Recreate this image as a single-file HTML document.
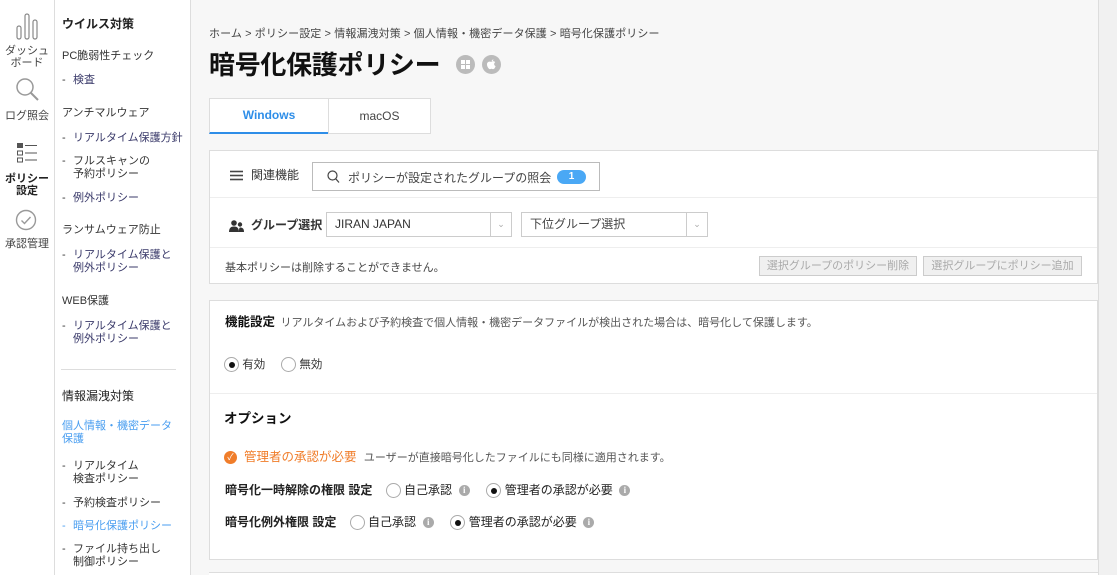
<!DOCTYPE html>
<html><head><meta charset="utf-8"><style>
*{box-sizing:border-box;margin:0;padding:0}
body{width:1117px;height:575px;overflow:hidden;background:#f7f7f7;font-family:"Liberation Sans","Noto Sans CJK JP",sans-serif;color:#333;font-size:11px;position:relative}
.a{position:absolute;white-space:nowrap}
.icol{position:absolute;left:0;top:0;width:55px;height:575px;background:#fff;border-right:1px solid #ddd}
.snav{position:absolute;left:55px;top:0;width:136px;height:575px;background:#fff;border-right:1px solid #ddd}
.ic{position:absolute;left:0;width:54px;text-align:center;font-size:11px;line-height:12px;color:#444}
.n{position:absolute;left:7px;font-size:11px;line-height:13px;color:#333}
.d{position:absolute;left:7px;font-size:11px;line-height:13px;color:#333}
.d span{display:inline-block;width:11px}
.d .t{color:#3a3a6a}
.panel{position:absolute;background:#fff;border:1px solid #ddd}
.btn{position:absolute;border:1px solid #ccc;background:#f0f0f0;color:#aaa;font-size:11px;text-align:center;line-height:18px}
.radio{display:inline-block;width:15px;height:15px;border:1px solid #aaa;border-radius:50%;vertical-align:middle;position:relative;background:#fff}
.radio.on::after{content:"";position:absolute;left:3.5px;top:3.5px;width:6px;height:6px;border-radius:50%;background:#111}
.info{display:inline-block;width:11px;height:11px;border-radius:50%;background:#aaa;color:#fff;font-size:9px;line-height:11px;text-align:center;font-weight:bold;vertical-align:middle;font-family:"Liberation Serif",serif}
.sel{position:absolute;border:1px solid #ccc;background:#fff;height:25px;font-size:12px;line-height:23px;padding-left:8px;color:#333}
.sel .ar{position:absolute;right:0;top:0;width:21px;height:23px;border-left:1px solid #ccc;color:#aaa;text-align:center;font-size:9px}
.row{font-size:12px;color:#222}
</style></head><body>
<div class="icol">
<svg class="a" style="left:16px;top:12px" width="22" height="28" viewBox="0 0 22 28"><g fill="none" stroke="#888" stroke-width="1.2"><rect x="1" y="14" width="4" height="13" rx="2"/><rect x="9" y="2" width="4" height="25" rx="2"/><rect x="17" y="8" width="4" height="19" rx="2"/></g></svg>
<div class="ic" style="top:45px">ダッシュ<br>ボード</div>
<svg class="a" style="left:15px;top:77px" width="26" height="24" viewBox="0 0 26 24"><circle cx="10" cy="10" r="8" fill="none" stroke="#999" stroke-width="1.5"/><line x1="16" y1="16" x2="23" y2="23" stroke="#999" stroke-width="2"/></svg>
<div class="ic" style="top:110px">ログ照会</div>
<svg class="a" style="left:16px;top:142px" width="22" height="22" viewBox="0 0 22 22"><rect x="1" y="1" width="6" height="5" fill="#555"/><rect x="1.5" y="9" width="5" height="4" fill="none" stroke="#555"/><rect x="1.5" y="16" width="5" height="4" fill="none" stroke="#555"/><g stroke="#555"><line x1="9" y1="3.5" x2="21" y2="3.5"/><line x1="9" y1="11" x2="21" y2="11"/><line x1="9" y1="18" x2="21" y2="18"/></g></svg>
<div class="ic" style="top:173px;font-weight:bold;color:#222">ポリシー<br>設定</div>
<svg class="a" style="left:15px;top:209px" width="22" height="22" viewBox="0 0 22 22"><circle cx="11" cy="11" r="9.5" fill="none" stroke="#999" stroke-width="1.4"/><path d="M6.5 11.5l3 3 6-6.5" fill="none" stroke="#999" stroke-width="1.4"/></svg>
<div class="ic" style="top:238px">承認管理</div>
</div>
<div class="snav">
<div class="n" style="top:18px;font-weight:bold;font-size:12px;color:#222">ウイルス対策</div>
<div class="n" style="top:50px">PC脆弱性チェック</div>
<div class="d" style="top:74px"><span>-</span><b class="t" style="font-weight:normal">検査</b></div>
<div class="n" style="top:107px">アンチマルウェア</div>
<div class="d" style="top:132px"><span>-</span><b class="t" style="font-weight:normal">リアルタイム保護方針</b></div>
<div class="d" style="top:155px"><span>-</span>フルスキャンの<br><span></span>予約ポリシー</div>
<div class="d" style="top:192px"><span>-</span><b class="t" style="font-weight:normal">例外ポリシー</b></div>
<div class="n" style="top:224px">ランサムウェア防止</div>
<div class="d" style="top:249px"><span>-</span><b class="t" style="font-weight:normal">リアルタイム保護と<br><span></span>例外ポリシー</b></div>
<div class="n" style="top:295px">WEB保護</div>
<div class="d" style="top:320px"><span>-</span><b class="t" style="font-weight:normal">リアルタイム保護と<br><span></span>例外ポリシー</b></div>
<div class="a" style="left:6px;top:369px;width:115px;height:1px;background:#ddd"></div>
<div class="n" style="top:390px;font-size:12px;color:#222">情報漏洩対策</div>
<div class="n" style="top:420px;color:#4a9ef0">個人情報・機密データ<br>保護</div>
<div class="d" style="top:460px"><span>-</span>リアルタイム<br><span></span>検査ポリシー</div>
<div class="d" style="top:497px"><span>-</span>予約検査ポリシー</div>
<div class="d" style="top:520px;color:#4a9ef0"><span>-</span>暗号化保護ポリシー</div>
<div class="d" style="top:543px"><span>-</span>ファイル持ち出し<br><span></span>制御ポリシー</div>
</div>
<div class="a" style="left:1098px;top:0;width:1px;height:575px;background:#ddd"></div>
<div class="a" style="left:1099px;top:0;width:18px;height:575px;background:#f1f1f1"></div>

<div class="a" style="left:209px;top:25px;font-size:11px;color:#444;letter-spacing:0.1px">ホーム &gt; ポリシー設定 &gt; 情報漏洩対策 &gt; 個人情報・機密データ保護 &gt; 暗号化保護ポリシー</div>
<div class="a" style="left:209px;top:48px;font-size:26px;font-weight:bold;color:#111;line-height:34px;letter-spacing:-0.3px">暗号化保護ポリシー</div>
<div class="a" style="left:456px;top:55px;width:19px;height:19px;border-radius:50%;background:#bbb"><svg width="19" height="19" viewBox="0 0 19 19"><g fill="#fff"><rect x="5" y="5" width="4" height="4"/><rect x="10" y="5" width="4" height="4"/><rect x="5" y="10" width="4" height="4"/><rect x="10" y="10" width="4" height="4"/></g></svg></div>
<div class="a" style="left:482px;top:55px;width:19px;height:19px;border-radius:50%;background:#bbb"><svg width="19" height="19" viewBox="0 0 19 19"><path d="M9.5 7c1-1 3-1 3.7.3-1.6 1-1.3 3.3.4 3.8-.5 1.5-1.4 3-2.4 3-.7 0-1-.4-1.7-.4s-1 .4-1.7.4c-1.2 0-2.8-2.6-2.8-4.6 0-2.6 2.4-3.3 4.5-2.5z M9.6 6.5c0-1 .7-2 1.8-2.1 0 1.1-.8 2-1.8 2.1z" fill="#fff"/></svg></div>

<div class="a" style="left:209px;top:98px;width:120px;height:36px;background:#fff;border:1px solid #ddd;border-bottom:2px solid #2e8ee8;color:#2e8ee8;font-weight:bold;font-size:12px;text-align:center;line-height:33px">Windows</div>
<div class="a" style="left:328px;top:98px;width:103px;height:36px;background:#fff;border:1px solid #ddd;color:#444;font-size:12px;text-align:center;line-height:34px">macOS</div>

<div class="panel" style="left:209px;top:150px;width:889px;height:134px">
<div class="a" style="left:0;top:46px;width:887px;height:1px;background:#eee"></div>
<div class="a" style="left:0;top:96px;width:887px;height:1px;background:#eee"></div>
<svg class="a" style="left:20px;top:19px" width="13" height="11"><g stroke="#444" stroke-width="1.6"><line x1="0" y1="1.5" x2="13" y2="1.5"/><line x1="0" y1="5.5" x2="13" y2="5.5"/><line x1="0" y1="9.5" x2="13" y2="9.5"/></g></svg>
<div class="a" style="left:41px;top:15px;font-size:12px;color:#333">関連機能</div>
<div class="a" style="left:102px;top:11px;width:288px;height:29px;border:1px solid #bbb;background:#fff">
<svg class="a" style="left:14px;top:7px" width="13" height="14"><circle cx="5.5" cy="5.5" r="4.5" fill="none" stroke="#444" stroke-width="1.2"/><line x1="8.8" y1="8.8" x2="12" y2="12.5" stroke="#444" stroke-width="1.2"/></svg>
<div class="a" style="left:35px;top:6px;font-size:12px;color:#444">ポリシーが設定されたグループの照会</div>
<div class="a" style="left:244px;top:7px;width:29px;height:14px;border-radius:7px;background:#4aa8f5;color:#fff;font-weight:bold;font-size:10px;text-align:center;line-height:14px">1</div>
</div>
<svg class="a" style="left:19px;top:69px" width="15" height="12" viewBox="0 0 15 12"><circle cx="5" cy="3" r="2.8" fill="#333"/><path d="M0 12c0-4 2-5.5 5-5.5s5 1.5 5 5.5z" fill="#333"/><circle cx="11" cy="4.5" r="2.2" fill="#333"/><path d="M10 12c0-2.5 0-4 1-4.5 2.5 0 4 1 4 4.5z" fill="#333"/></svg>
<div class="a" style="left:41px;top:65px;font-size:12px;color:#333;font-weight:bold">グループ選択</div>
<div class="sel" style="left:116px;top:61px;width:186px">JIRAN JAPAN<div class="ar">&#8964;</div></div>
<div class="sel" style="left:311px;top:61px;width:187px;color:#444">下位グループ選択<div class="ar">&#8964;</div></div>
<div class="a" style="left:15px;top:108px;font-size:11px;color:#444">基本ポリシーは削除することができません。</div>
<div class="btn" style="left:549px;top:105px;width:158px;height:20px">選択グループのポリシー削除</div>
<div class="btn" style="left:713px;top:105px;width:159px;height:20px">選択グループにポリシー追加</div>
</div>

<div class="panel" style="left:209px;top:300px;width:889px;height:260px">
<div class="a" style="left:15px;top:10px;font-size:12.5px;font-weight:bold;color:#111">機能設定 <span style="font-weight:normal;font-size:11px;color:#555;margin-left:2px">リアルタイムおよび予約検査で個人情報・機密データファイルが検出された場合は、暗号化して保護します。</span></div>
<div class="a" style="left:14px;top:55px;font-size:11.5px"><span class="radio on"></span> 有効 &nbsp;&nbsp;&nbsp; <span class="radio"></span> 無効</div>
<div class="a" style="left:0;top:92px;width:887px;height:1px;background:#eee"></div>
<div class="a" style="left:14px;top:106px;font-size:13.5px;font-weight:bold;color:#111">オプション</div>
<div class="a" style="left:14px;top:145px;font-size:12.5px;color:#f07d2a"><span style="display:inline-block;width:13px;height:13px;border-radius:50%;background:#f07d2a;color:#fff;font-size:9px;line-height:13px;text-align:center;vertical-align:middle">✓</span>&nbsp; 管理者の承認が必要 <span style="color:#555;font-size:11px;margin-left:4px">ユーザーが直接暗号化したファイルにも同様に適用されます。</span></div>
<div class="a row" style="left:15px;top:180px"><b>暗号化一時解除の権限</b> <b>設定</b> &nbsp;&nbsp;&nbsp;<span class="radio"></span> 自己承認 &nbsp;<span class="info">i</span> &nbsp;&nbsp;&nbsp; <span class="radio on"></span> 管理者の承認が必要 &nbsp;<span class="info">i</span></div>
<div class="a row" style="left:15px;top:212px"><b>暗号化例外権限</b> <b>設定</b> &nbsp;&nbsp;&nbsp;<span class="radio"></span> 自己承認 &nbsp;<span class="info">i</span> &nbsp;&nbsp;&nbsp; <span class="radio on"></span> 管理者の承認が必要 &nbsp;<span class="info">i</span></div>
</div>
<div class="a" style="left:209px;top:572px;width:889px;height:3px;background:#fff;border-top:1px solid #ddd"></div>
</body></html>
